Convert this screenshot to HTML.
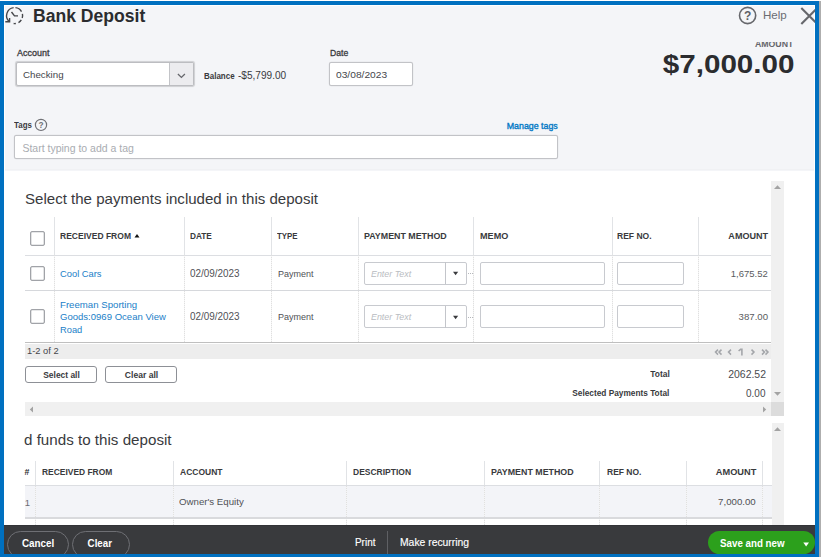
<!DOCTYPE html>
<html><head><meta charset="utf-8">
<style>
*{box-sizing:border-box;margin:0;padding:0}
html,body{width:821px;height:557px;overflow:hidden;background:#fff;font-family:"Liberation Sans",sans-serif}
.a{position:absolute}
.t{position:absolute;white-space:nowrap;line-height:normal}
.inp{position:absolute;background:#fff;border:1px solid #c8cacf;border-radius:2px}
.cb{position:absolute;width:15px;height:15px;border:1px solid #a1a3a8;box-shadow:inset 0 0 0 0.3px #a1a3a8;border-radius:2px;background:#fff}
.hl{position:absolute;height:1px;background:#dcdee2}
.vl{position:absolute;width:1px;background:#e1e3e6}
.dl{position:absolute;width:1px;background:repeating-linear-gradient(to bottom,#e0e0e0 0,#e0e0e0 1px,#f5f5f5 1px,#f5f5f5 2px)}
.sb{position:absolute;background:#f0f0f0}
</style></head><body>
<!-- right strip outside frame -->
<div class="a" style="left:819px;top:0;width:2px;height:557px;background:#aeaeae"></div>
<!-- header bg -->
<div class="a" style="left:5px;top:6px;width:809px;height:164.5px;background:#f4f5f8"></div>
<div class="a" style="left:5px;top:169px;width:809px;height:1px;background:#f0f1f4"></div>
<!-- clock icon -->
<svg class="a" style="left:2px;top:4px" width="26" height="24" viewBox="0 0 26 24">
  <g fill="none" stroke="#46474b" stroke-width="1.4" stroke-linecap="butt">
    <path d="M11.63 3.66 A8.0 8.0 0 0 0 7.46 17.73"/>
    <path d="M13.44 3.64 A8.0 8.0 0 0 1 19.53 7.60"/>
    <path d="M20.43 9.94 A8.0 8.0 0 0 1 20.21 14.07"/>
    <path d="M19.31 15.96 A8.0 8.0 0 0 1 16.48 18.60"/>
    <path d="M13.85 19.50 A8.0 8.0 0 0 1 11.63 19.54"/>
    <path d="M9.5 8 L12.5 11.9 L16 11.9"/>
    <path d="M3.3 17.8 L7.6 17.8 L7.6 14"/>
  </g>
</svg>
<!-- help icon -->
<svg class="a" style="left:737px;top:5px" width="22" height="22" viewBox="0 0 22 22">
  <circle cx="10.6" cy="10.5" r="8.1" fill="none" stroke="#66676c" stroke-width="1.6"/>
  <text x="10.6" y="14.8" font-family="Liberation Sans" font-size="12" font-weight="700" text-anchor="middle" fill="#5f6065">?</text>
</svg>
<!-- close X -->
<svg class="a" style="left:798px;top:5px" width="22" height="22" viewBox="0 0 22 22">
  <path d="M3.3 3 L19.3 19 M19.3 3 L3.3 19" stroke="#66676c" stroke-width="2.1"/>
</svg>
<!-- account dropdown -->
<div class="a" style="left:16px;top:62px;width:178px;height:24px;background:#fff;border:1px solid #bcbdc1;border-radius:2px;box-shadow:0 0 0.8px 0.4px #cfd0d3">
  <div class="a" style="right:0;top:0;bottom:0;width:24px;background:#ececef;border-left:1px solid #c3c4c8"></div>
</div>
<svg class="a" style="left:177px;top:73px" width="9" height="6" viewBox="0 0 9 6"><path d="M0.9 1 L4.4 4.4 L7.9 1" fill="none" stroke="#66676c" stroke-width="1.3"/></svg>
<!-- date -->
<div class="inp" style="left:329px;top:62px;width:84px;height:23.5px;border:1px solid #c2c3c7;box-shadow:0 0 0.6px 0.2px #d8d9dc"></div>
<!-- tags -->
<svg class="a" style="left:34px;top:118px" width="14" height="14" viewBox="0 0 14 14">
  <circle cx="7" cy="6.9" r="5.6" fill="none" stroke="#707176" stroke-width="1.2"/>
  <text x="7" y="9.8" font-family="Liberation Sans" font-size="8.3" font-weight="700" text-anchor="middle" fill="#707176">?</text>
</svg>
<div class="inp" style="left:14px;top:135px;width:544px;height:24px;border:1px solid #c2c3c7;box-shadow:0 0 0.6px 0.2px #d8d9dc"></div>

<!-- ===== section 1 ===== -->
<div class="sb" style="left:771px;top:181px;width:13px;height:221px"></div>
<svg class="a" style="left:773px;top:184px" width="9" height="6" viewBox="0 0 9 6"><path d="M1 5 L4.5 1.2 L8 5Z" fill="#a3a3a3"/></svg>
<svg class="a" style="left:773px;top:391px" width="9" height="6" viewBox="0 0 9 6"><path d="M1 1 L4.5 4.8 L8 1Z" fill="#a3a3a3"/></svg>
<!-- header col lines -->
<div class="vl" style="left:54px;top:217px;height:38px"></div>
<div class="vl" style="left:184px;top:217px;height:38px"></div>
<div class="vl" style="left:271px;top:217px;height:38px"></div>
<div class="vl" style="left:358px;top:217px;height:38px"></div>
<div class="vl" style="left:473px;top:217px;height:38px"></div>
<div class="vl" style="left:611.5px;top:217px;height:38px"></div>
<div class="vl" style="left:698px;top:217px;height:38px"></div>
<div class="hl" style="left:24.5px;top:254.5px;width:746.5px"></div>
<div class="cb" style="left:30px;top:230.7px"></div>
<svg class="a" style="left:134px;top:233px" width="6" height="5" viewBox="0 0 6 5"><path d="M0.5 4.5 L3 1 L5.5 4.5Z" fill="#111"/></svg>
<!-- body dotted lines -->
<div class="dl" style="left:54px;top:255px;height:87px"></div>
<div class="dl" style="left:184px;top:255px;height:87px"></div>
<div class="dl" style="left:271px;top:255px;height:87px"></div>
<div class="dl" style="left:358px;top:255px;height:87px"></div>
<div class="dl" style="left:473px;top:255px;height:87px"></div>
<div class="dl" style="left:611.5px;top:255px;height:87px"></div>
<div class="dl" style="left:698px;top:255px;height:87px"></div>
<div class="hl" style="left:24.5px;top:290px;width:746.5px;background:#d6d8dc"></div>
<div class="hl" style="left:24.5px;top:341.8px;width:746.5px;height:1.6px;background:#bfbfbf"></div>
<!-- checkboxes -->
<div class="cb" style="left:30px;top:265.8px"></div>
<div class="cb" style="left:30px;top:309.2px"></div>
<!-- payment method inputs -->
<div class="inp" style="left:364px;top:261.5px;width:103px;height:23px"></div>
<div class="a" style="left:445px;top:262px;width:1px;height:22px;background:#c3c5ca"></div>
<svg class="a" style="left:452px;top:271px" width="7" height="5" viewBox="0 0 7 5"><path d="M1 0.8 L6.2 0.8 L3.6 4.3Z" fill="#393a3d"/></svg>
<div class="inp" style="left:364px;top:305px;width:103px;height:23px"></div>
<div class="a" style="left:445px;top:305.5px;width:1px;height:22px;background:#c3c5ca"></div>
<svg class="a" style="left:452px;top:314.5px" width="7" height="5" viewBox="0 0 7 5"><path d="M1 0.8 L6.2 0.8 L3.6 4.3Z" fill="#393a3d"/></svg>
<div class="a" style="left:467.5px;top:273px;width:5px;border-top:1px dotted #b5b7bb"></div>
<div class="a" style="left:467.5px;top:316.5px;width:5px;border-top:1px dotted #b5b7bb"></div>
<!-- memo & ref -->
<div class="inp" style="left:480px;top:261.5px;width:124.5px;height:23px"></div>
<div class="inp" style="left:480px;top:305px;width:124.5px;height:23px"></div>
<div class="inp" style="left:617px;top:261.5px;width:67px;height:23px"></div>
<div class="inp" style="left:617px;top:305px;width:67px;height:23px"></div>
<!-- pager bg -->
<div class="a" style="left:24.5px;top:343.5px;width:746.5px;height:15px;background:#ededed"></div>
<svg class="a" style="left:705px;top:340px" width="70" height="25" viewBox="0 0 70 25">
  <g fill="none" stroke="#a4a6aa" stroke-width="1.5">
    <path d="M13 9.6 L10.5 12.1 L13 14.6 M16.5 9.6 L14 12.1 L16.5 14.6"/>
    <path d="M26 9.6 L23.5 12.1 L26 14.6"/>
    <path d="M46.5 9.6 L49 12.1 L46.5 14.6"/>
    <path d="M57 9.6 L59.5 12.1 L57 14.6 M60.5 9.6 L63 12.1 L60.5 14.6"/>
  </g>
  <path d="M33.6 11 L35.6 9.3 L36.9 9.3 L36.9 15.6 M33.6 15.6" fill="none" stroke="#a4a6aa" stroke-width="1.6"/>
</svg>
<!-- buttons -->
<div class="a" style="left:24.8px;top:366.3px;width:72px;height:17px;border:1px solid #8d9096;border-radius:3px;background:#fff"></div>
<div class="a" style="left:105.3px;top:366.3px;width:72px;height:17px;border:1px solid #8d9096;border-radius:3px;background:#fff"></div>
<!-- h scrollbar -->
<div class="sb" style="left:24.8px;top:402.3px;width:746px;height:13.3px"></div>
<div class="a" style="left:771px;top:402px;width:13px;height:13.6px;background:#dcdcdc"></div>
<svg class="a" style="left:29px;top:406px" width="5" height="7" viewBox="0 0 5 7"><path d="M4 0.5 L0.8 3.5 L4 6.5Z" fill="#a3a3a3"/></svg>
<svg class="a" style="left:762px;top:406px" width="5" height="7" viewBox="0 0 5 7"><path d="M1 0.5 L4.2 3.5 L1 6.5Z" fill="#a3a3a3"/></svg>

<!-- ===== section 2 ===== -->
<div class="sb" style="left:771.5px;top:423px;width:12.5px;height:102px"></div>
<svg class="a" style="left:773px;top:426px" width="9" height="6" viewBox="0 0 9 6"><path d="M1 5 L4.5 1.2 L8 5Z" fill="#a3a3a3"/></svg>
<div class="vl" style="left:35px;top:461px;height:25px"></div>
<div class="vl" style="left:173px;top:461px;height:25px"></div>
<div class="vl" style="left:346px;top:461px;height:25px"></div>
<div class="vl" style="left:484px;top:461px;height:25px"></div>
<div class="vl" style="left:599px;top:461px;height:25px"></div>
<div class="vl" style="left:686px;top:461px;height:25px"></div>
<div class="vl" style="left:762px;top:461px;height:25px"></div>
<div class="hl" style="left:24.5px;top:485.3px;width:747px"></div>
<div class="a" style="left:24.5px;top:486px;width:747px;height:31.5px;background:#f3f4f8"></div>
<div class="dl" style="left:35px;top:486px;height:40px"></div>
<div class="dl" style="left:173px;top:486px;height:40px"></div>
<div class="dl" style="left:346px;top:486px;height:40px"></div>
<div class="dl" style="left:484px;top:486px;height:40px"></div>
<div class="dl" style="left:599px;top:486px;height:40px"></div>
<div class="dl" style="left:686px;top:486px;height:40px"></div>
<div class="dl" style="left:762px;top:486px;height:40px"></div>
<div class="hl" style="left:24.5px;top:517px;width:747px;height:1.5px;background:#d9dadd"></div>

<!-- ===== footer ===== -->
<div class="a" style="left:4px;top:524.7px;width:811px;height:30px;background:#393a3d"></div>
<div class="a" style="left:4px;top:524.7px;width:811px;height:1.3px;background:#323337"></div>
<div class="a" style="left:7.2px;top:530.6px;width:62px;height:27px;border:1px solid #6e6f74;border-radius:14px"></div>
<div class="a" style="left:71.5px;top:530.6px;width:58px;height:27px;border:1px solid #6e6f74;border-radius:14px"></div>
<div class="a" style="left:386.5px;top:530.7px;width:1.2px;height:24px;background:#5f6064"></div>
<div class="a" style="left:708.3px;top:530.5px;width:106.5px;height:23.2px;background:#2ca01c;border-radius:11.6px"></div>
<svg class="a" style="left:801px;top:540px" width="10" height="8" viewBox="0 0 10 8"><path d="M2.3 2.6 L8 2.6 L5.1 6.4Z" fill="#fff"/></svg>

<div class="t" style="top:6.26px;font-size:17.5px;font-weight:700;color:#2b2c2f;left:33.10px;transform:scaleX(1.0036);transform-origin:1.00px 0;">Bank Deposit</div>
<div class="t" style="top:9.29px;font-size:11.5px;font-weight:400;color:#6b6c72;left:763.00px;transform:scaleX(1.0062);transform-origin:0.00px 0;">Help</div>
<div class="t" style="top:39.07px;font-size:9.2px;font-weight:700;color:#66676c;right:27.19px;transform:scaleX(0.9532);transform-origin:40.70px 0;">AMOUNT</div>
<div class="t" style="top:50.02px;font-size:25.5px;font-weight:700;color:#2b2c2f;right:26.52px;transform:scaleX(1.1610);transform-origin:113.26px 0;">$7,000.00</div>
<div class="t" style="top:47.66px;font-size:9px;font-weight:400;color:#393a3d;-webkit-text-stroke:0.3px #393a3d;left:16.70px;transform:scaleX(0.9964);transform-origin:0.00px 0;">Account</div>
<div class="t" style="top:68.71px;font-size:9.6px;font-weight:400;color:#45464b;left:23.40px;transform:scaleX(1.0136);transform-origin:0.00px 0;">Checking</div>
<div class="t" style="top:71.27px;font-size:9.2px;font-weight:700;color:#393a3d;left:204.00px;transform:scaleX(0.8682);transform-origin:0.00px 0;">Balance</div>
<div class="t" style="top:69.75px;font-size:10px;font-weight:400;color:#393a3d;left:238.20px;transform:scaleX(1.0071);transform-origin:0.00px 0;">-$5,799.00</div>
<div class="t" style="top:47.66px;font-size:9px;font-weight:400;color:#393a3d;-webkit-text-stroke:0.3px #393a3d;left:330.40px;transform:scaleX(0.9576);transform-origin:0.00px 0;">Date</div>
<div class="t" style="top:68.71px;font-size:9.6px;font-weight:400;color:#45464b;left:336.30px;transform:scaleX(1.0654);transform-origin:0.00px 0;">03/08/2023</div>
<div class="t" style="top:119.57px;font-size:9.2px;font-weight:700;color:#393a3d;left:14.20px;transform:scaleX(0.8619);transform-origin:0.00px 0;">Tags</div>
<div class="t" style="top:120.98px;font-size:9.3px;font-weight:400;color:#0077c5;-webkit-text-stroke:0.35px #0077c5;right:263.35px;transform:scaleX(0.9500);transform-origin:54.10px 0;">Manage tags</div>
<div class="t" style="top:142.10px;font-size:10.5px;font-weight:400;color:#a9acb1;left:22.40px;">Start typing to add a tag</div>
<div class="t" style="top:190.58px;font-size:14.5px;font-weight:400;color:#393a3d;left:25.40px;transform:scaleX(1.0387);transform-origin:0.00px 0;">Select the payments included in this deposit</div>
<div class="t" style="top:230.31px;font-size:9.6px;font-weight:700;color:#393a3d;left:60.40px;transform:scaleX(0.8879);transform-origin:0.00px 0;">RECEIVED FROM</div>
<div class="t" style="top:230.31px;font-size:9.6px;font-weight:700;color:#393a3d;left:190.40px;transform:scaleX(0.8614);transform-origin:0.00px 0;">DATE</div>
<div class="t" style="top:230.31px;font-size:9.6px;font-weight:700;color:#393a3d;left:277.10px;transform:scaleX(0.8185);transform-origin:0.00px 0;">TYPE</div>
<div class="t" style="top:230.31px;font-size:9.6px;font-weight:700;color:#393a3d;left:364.10px;transform:scaleX(0.9239);transform-origin:0.00px 0;">PAYMENT METHOD</div>
<div class="t" style="top:230.31px;font-size:9.6px;font-weight:700;color:#393a3d;left:479.80px;transform:scaleX(0.9479);transform-origin:0.00px 0;">MEMO</div>
<div class="t" style="top:230.31px;font-size:9.6px;font-weight:700;color:#393a3d;left:617.30px;transform:scaleX(0.8890);transform-origin:0.00px 0;">REF NO.</div>
<div class="t" style="top:230.31px;font-size:9.6px;font-weight:700;color:#393a3d;right:53.34px;transform:scaleX(0.9446);transform-origin:42.24px 0;">AMOUNT</div>
<div class="t" style="top:268.13px;font-size:9.8px;font-weight:400;color:#1a80c8;left:60.20px;transform:scaleX(0.9529);transform-origin:0.00px 0;">Cool Cars</div>
<div class="t" style="top:298.83px;font-size:9.8px;font-weight:400;color:#1a80c8;left:60.20px;transform:scaleX(0.9838);transform-origin:0.00px 0;">Freeman Sporting</div>
<div class="t" style="top:311.33px;font-size:9.8px;font-weight:400;color:#1a80c8;left:60.20px;transform:scaleX(0.9738);transform-origin:0.00px 0;">Goods:0969 Ocean View</div>
<div class="t" style="top:324.03px;font-size:9.8px;font-weight:400;color:#1a80c8;left:60.20px;transform:scaleX(0.9490);transform-origin:0.00px 0;">Road</div>
<div class="t" style="top:267.97px;font-size:10.2px;font-weight:400;color:#505156;left:190.30px;transform:scaleX(0.9723);transform-origin:0.00px 0;">02/09/2023</div>
<div class="t" style="top:268.29px;font-size:9.4px;font-weight:400;color:#505156;left:277.80px;transform:scaleX(0.9601);transform-origin:0.00px 0;">Payment</div>
<div class="t" style="top:268.23px;font-size:9.8px;font-weight:400;color:#b9bcc1;font-style:italic;left:370.50px;transform:scaleX(0.9063);transform-origin:0.00px 0;">Enter Text</div>
<div class="t" style="top:310.97px;font-size:10.2px;font-weight:400;color:#505156;left:190.30px;transform:scaleX(0.9723);transform-origin:0.00px 0;">02/09/2023</div>
<div class="t" style="top:311.29px;font-size:9.4px;font-weight:400;color:#505156;left:277.80px;transform:scaleX(0.9601);transform-origin:0.00px 0;">Payment</div>
<div class="t" style="top:311.23px;font-size:9.8px;font-weight:400;color:#b9bcc1;font-style:italic;left:370.50px;transform:scaleX(0.9063);transform-origin:0.00px 0;">Enter Text</div>
<div class="t" style="top:268.20px;font-size:9.5px;font-weight:400;color:#5a5b60;right:53.22px;">1,675.52</div>
<div class="t" style="top:311.20px;font-size:9.5px;font-weight:400;color:#5a5b60;right:53.22px;transform:scaleX(1.0148);transform-origin:28.77px 0;">387.00</div>
<div class="t" style="top:345.39px;font-size:9.4px;font-weight:400;color:#45464b;left:27.20px;transform:scaleX(0.9944);transform-origin:0.00px 0;">1-2 of 2</div>
<div class="t" style="top:369.66px;font-size:9px;font-weight:700;color:#393a3d;left:41.74px;transform:scaleX(0.9345);transform-origin:19.26px 0;">Select all</div>
<div class="t" style="top:369.66px;font-size:9px;font-weight:700;color:#393a3d;left:124.14px;transform:scaleX(0.9502);transform-origin:17.26px 0;">Clear all</div>
<div class="t" style="top:368.86px;font-size:9px;font-weight:700;color:#393a3d;right:151.30px;transform:scaleX(0.9346);transform-origin:20.33px 0;">Total</div>
<div class="t" style="top:368.10px;font-size:10.5px;font-weight:400;color:#4a4b4f;right:55.26px;transform:scaleX(0.9944);transform-origin:38.12px 0;">2062.52</div>
<div class="t" style="top:387.86px;font-size:9px;font-weight:700;color:#393a3d;right:151.30px;transform:scaleX(0.9211);transform-origin:104.87px 0;">Selected Payments Total</div>
<div class="t" style="top:386.50px;font-size:10.5px;font-weight:400;color:#4a4b4f;right:55.26px;transform:scaleX(0.9516);transform-origin:20.60px 0;">0.00</div>
<div class="t" style="top:432.36px;font-size:14.3px;font-weight:400;color:#393a3d;left:24.20px;transform:scaleX(1.0610);transform-origin:0.00px 0;">d funds to this deposit</div>
<div class="t" style="top:467.24px;font-size:8.8px;font-weight:700;color:#2b2c2f;left:24.60px;">#</div>
<div class="t" style="top:466.87px;font-size:9.2px;font-weight:700;color:#393a3d;left:42.00px;transform:scaleX(0.9179);transform-origin:0.00px 0;">RECEIVED FROM</div>
<div class="t" style="top:466.87px;font-size:9.2px;font-weight:700;color:#393a3d;left:179.70px;transform:scaleX(0.9261);transform-origin:0.00px 0;">ACCOUNT</div>
<div class="t" style="top:466.87px;font-size:9.2px;font-weight:700;color:#393a3d;left:353.20px;transform:scaleX(0.9247);transform-origin:0.00px 0;">DESCRIPTION</div>
<div class="t" style="top:466.87px;font-size:9.2px;font-weight:700;color:#393a3d;left:490.50px;transform:scaleX(0.9638);transform-origin:0.00px 0;">PAYMENT METHOD</div>
<div class="t" style="top:466.87px;font-size:9.2px;font-weight:700;color:#393a3d;left:606.70px;transform:scaleX(0.9235);transform-origin:0.00px 0;">REF NO.</div>
<div class="t" style="top:466.87px;font-size:9.2px;font-weight:700;color:#393a3d;right:64.69px;transform:scaleX(1.0048);transform-origin:40.70px 0;">AMOUNT</div>
<div class="t" style="top:496.70px;font-size:9.5px;font-weight:400;color:#6b6c72;left:24.80px;">1</div>
<div class="t" style="top:496.04px;font-size:9.9px;font-weight:400;color:#505156;left:179.40px;transform:scaleX(0.9795);transform-origin:0.00px 0;">Owner's Equity</div>
<div class="t" style="top:496.22px;font-size:9.7px;font-weight:400;color:#505156;right:64.91px;transform:scaleX(0.9968);transform-origin:38.32px 0;">7,000.00</div>
<div class="t" style="top:536.75px;font-size:11px;font-weight:700;color:#ffffff;left:20.39px;transform:scaleX(0.8940);transform-origin:18.01px 0;">Cancel</div>
<div class="t" style="top:536.75px;font-size:11px;font-weight:700;color:#ffffff;left:86.08px;transform:scaleX(0.8854);transform-origin:14.12px 0;">Clear</div>
<div class="t" style="top:535.80px;font-size:10.5px;font-weight:400;color:#ffffff;-webkit-text-stroke:0.15px #ffffff;left:354.60px;transform:scaleX(0.9459);transform-origin:0.00px 0;">Print</div>
<div class="t" style="top:535.80px;font-size:10.5px;font-weight:400;color:#ffffff;-webkit-text-stroke:0.15px #ffffff;left:399.50px;transform:scaleX(0.9860);transform-origin:0.00px 0;">Make recurring</div>
<div class="t" style="top:537.41px;font-size:10.6px;font-weight:700;color:#ffffff;left:719.90px;transform:scaleX(0.9220);transform-origin:0.00px 0;">Save and new</div>
<div class="a" style="left:745px;top:36px;width:60px;height:5.6px;background:#f4f5f8"></div>

<!-- blue frame -->
<div class="a" style="left:0;top:0;width:821px;height:1px;background:#fff"></div>
<div class="a" style="left:0;top:1px;width:819px;height:4px;background:#0070c0"></div>
<div class="a" style="left:0;top:1px;width:4px;height:556px;background:#0070c0"></div>
<div class="a" style="left:815px;top:1px;width:4px;height:556px;background:#0070c0"></div>
<div class="a" style="left:0;top:554px;width:819px;height:3px;background:#0070c0"></div>
</body></html>
